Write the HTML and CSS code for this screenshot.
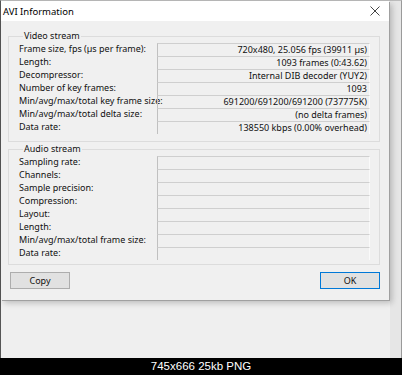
FILE: index.html
```html
<!DOCTYPE html>
<html lang="en">
<head>
    <meta charset="UTF-8">
    <meta name="viewport" content="width=device-width, initial-scale=1.0">
    <title>AVI Information</title>
    <link rel="stylesheet" href="styles.css">
</head>
<body>

<div class="viewer">
    <div class="shot">
        <div class="dialog">
            <div class="titlebar">
                <span class="title">AVI Information</span>
                <svg class="close" width="10" height="10" viewBox="0 0 10 10">
                    <path d="M0.5 0.5 L9.5 9.5 M9.5 0.5 L0.5 9.5" stroke="#444" stroke-width="1" fill="none"/>
                </svg>
            </div>

            <div class="body">
                <fieldset class="group">
                    <legend>Video stream</legend>
                    <div class="row"><span class="label">Frame size, fps (µs per frame):</span><span class="value">720x480, 25.056 fps (39911 µs)</span></div>
                    <div class="row"><span class="label">Length:</span><span class="value">1093 frames (0:43.62)</span></div>
                    <div class="row"><span class="label">Decompressor:</span><span class="value">Internal DIB decoder (YUY2)</span></div>
                    <div class="row"><span class="label">Number of key frames:</span><span class="value">1093</span></div>
                    <div class="row"><span class="label">Min/avg/max/total key frame size:</span><span class="value">691200/691200/691200 (737775K)</span></div>
                    <div class="row"><span class="label">Min/avg/max/total delta size:</span><span class="value">(no delta frames)</span></div>
                    <div class="row"><span class="label">Data rate:</span><span class="value">138550 kbps (0.00% overhead)</span></div>
                </fieldset>

                <fieldset class="group audio">
                    <legend>Audio stream</legend>
                    <div class="row"><span class="label">Sampling rate:</span><span class="value"></span></div>
                    <div class="row"><span class="label">Channels:</span><span class="value"></span></div>
                    <div class="row"><span class="label">Sample precision:</span><span class="value"></span></div>
                    <div class="row"><span class="label">Compression:</span><span class="value"></span></div>
                    <div class="row"><span class="label">Layout:</span><span class="value"></span></div>
                    <div class="row"><span class="label">Length:</span><span class="value"></span></div>
                    <div class="row"><span class="label">Min/avg/max/total frame size:</span><span class="value"></span></div>
                    <div class="row"><span class="label">Data rate:</span><span class="value"></span></div>
                </fieldset>

                <div class="buttons">
                    <button class="btn">Copy</button>
                    <button class="btn ok">OK</button>
                </div>
            </div>
        </div>
    </div>
    <div class="caption">745x666 25kb PNG</div>
</div>

</body>
</html>
```

FILE: styles.css
```css
* {
    box-sizing: border-box;
    margin: 0;
    padding: 0;
}
body {
    font-family: 'Noto Sans', sans-serif;
    background-color: #000;
    color: #111;
}
.viewer {
    width: 402px;
    height: 375px;
    background-color: #000;
}
.shot {
    height: 358px;
    background: linear-gradient(to right, #efefef 389px, #e6e6e6 389px);
    border-left: 1px solid #555;
    border-right: 1px solid #9a9a9a;
    border-top: 1px solid #bbb;
}
.dialog {
    width: 388px;
    height: 299px;
    background-color: #f0f0f0;
    box-shadow: 1px 1px 0 #a0a0a0, 3px 3px 6px rgba(0, 0, 0, 0.22);
}
.titlebar {
    height: 20px;
    background-color: #fff;
    display: flex;
    justify-content: space-between;
    align-items: center;
    padding: 0 9px 0 2px;
}
.title {
    font-size: 9.5px;
    color: #000;
}
.close {
    display: block;
}
.body {
    padding: 9px 9px 0 7px;
}
.group {
    border: 1px solid #dcdcdc;
    padding: 1px 8px 7px 10px;
}
.group legend {
    font-size: 9px;
    line-height: 12px;
    margin-left: 4px;
    padding: 0 1px;
}
.audio {
    margin-top: 1px;
    padding-bottom: 4px;
}
.row {
    display: grid;
    grid-template-columns: 138px 213px;
    height: 13px;
    font-size: 9px;
    line-height: 12px;
}
.label {
    white-space: nowrap;
}
.value {
    border-top: 1px solid #cfcfcf;
    border-left: 1px solid #c0c0c0;
    border-right: 1px solid #fafafa;
    text-align: right;
    padding-right: 2px;
    white-space: nowrap;
}
.buttons {
    display: flex;
    justify-content: space-between;
    margin-top: 7px;
    padding-left: 2px;
}
.btn {
    width: 60px;
    height: 17px;
    background-color: #e1e1e1;
    border: 1px solid #adadad;
    font-family: 'Noto Sans', sans-serif;
    font-size: 9px;
    color: #111;
}
.ok {
    border-color: #0078d7;
}
.caption {
    height: 17px;
    color: #fff;
    text-align: center;
    font-family: 'Liberation Sans', sans-serif;
    font-size: 11.5px;
    line-height: 17px;
}
```
